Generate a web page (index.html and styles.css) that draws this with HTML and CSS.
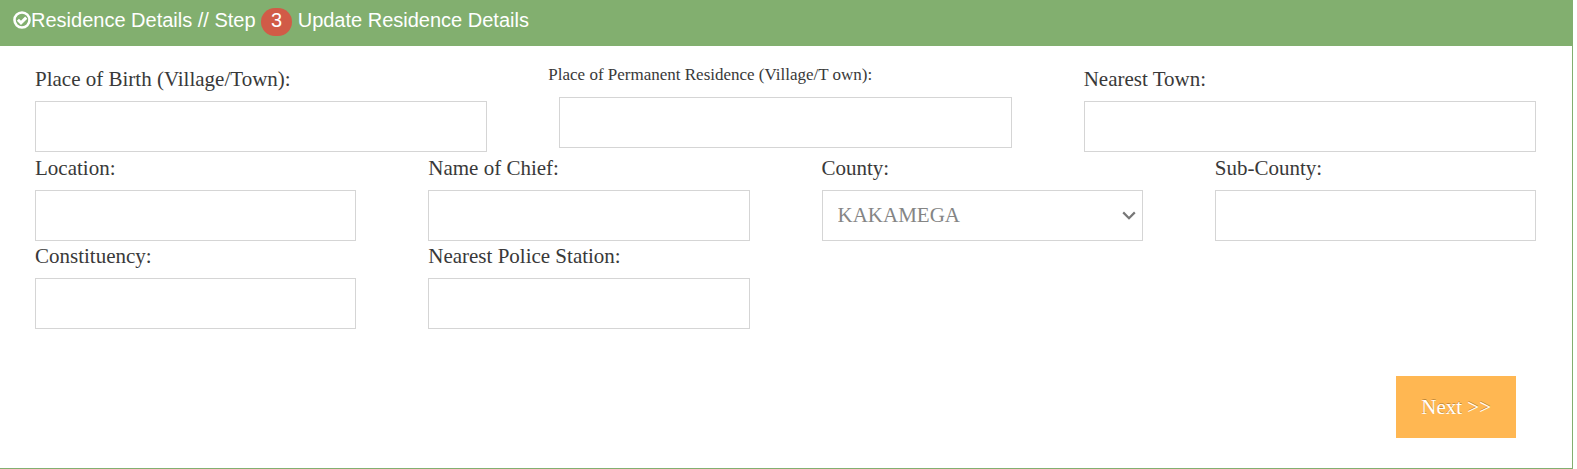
FILE: index.html
```
<!DOCTYPE html>
<html lang="en">
<head>
  <meta charset="UTF-8" />
  <meta name="viewport" content="width=device-width, initial-scale=1.0"/>
  <title>Residence Details</title>
  <link rel="stylesheet" href="styles.css">
</head>
<body>
  <form class="widget-box" action="#" method="post">
    <!-- Header -->
    <div class="widget-title">
      <h4><svg class="icon-check" viewBox="0 0 18 18" aria-hidden="true">
        <circle cx="9" cy="9" r="7.5" fill="none" stroke="#fff" stroke-width="2.6"/>
        <path d="M4.9 8.7l3.1 3.1 5.2-5.2" fill="none" stroke="#fff" stroke-width="3"/>
      </svg>Residence Details // Step <span class="badge">3</span> Update Residence Details</h4>
    </div>

    <div class="widget-body">
      <div class="row row-3">
        <div class="field">
          <label for="birth-place">Place of Birth (Village/Town):</label>
          <input type="text" id="birth-place" name="birth_place">
        </div>
        <div class="field field-small">
          <label for="permanent-residence">Place of Permanent Residence (Village/T own):</label>
          <input type="text" id="permanent-residence" name="permanent_residence">
        </div>
        <div class="field">
          <label for="nearest-town">Nearest Town:</label>
          <input type="text" id="nearest-town" name="nearest_town">
        </div>
      </div>

      <div class="row row-4">
        <div class="field">
          <label for="location">Location:</label>
          <input type="text" id="location" name="location">
        </div>
        <div class="field">
          <label for="chief">Name of Chief:</label>
          <input type="text" id="chief" name="chief">
        </div>
        <div class="field">
          <label for="county">County:</label>
          <select id="county" name="county">
            <option>KAKAMEGA</option>
          </select>
        </div>
        <div class="field">
          <label for="sub-county">Sub-County:</label>
          <input type="text" id="sub-county" name="sub_county">
        </div>
        <div class="field">
          <label for="constituency">Constituency:</label>
          <input type="text" id="constituency" name="constituency">
        </div>
        <div class="field">
          <label for="police-station">Nearest Police Station:</label>
          <input type="text" id="police-station" name="police_station">
        </div>
      </div>

      <div class="actions">
        <button type="submit" class="btn-next">Next &gt;&gt;</button>
      </div>
    </div>
  </form>
</body>
</html>
```

FILE: styles.css
```
* {
  box-sizing: border-box;
}

body {
  margin: 0;
  background-color: #fff;
  color: #393939;
  font-family: "Liberation Serif", "Times New Roman", serif;
  font-size: 21px;
}

.widget-box {
  margin-right: 4px;
  border-right: 1px solid #82af6f;
  border-bottom: 1px solid #82af6f;
}

.widget-title {
  padding: 8px 13px 10px;
  background-color: #82af6f;
  color: #fff;
}

.widget-title h4 {
  margin: 0;
  font-family: "Liberation Sans", Arial, sans-serif;
  font-size: 20px;
  font-weight: normal;
  line-height: 24px;
}

.icon-check {
  width: 18px;
  height: 18px;
  vertical-align: -2px;
}

.badge {
  display: inline-block;
  width: 31px;
  height: 28px;
  border-radius: 14px;
  background-color: #d15b47;
  text-align: center;
}

.widget-body {
  padding: 18px 36px 30px 35px;
}

.row {
  display: grid;
  column-gap: 72px;
  margin-bottom: 1px;
}

.row-3 {
  grid-template-columns: repeat(3, 1fr);
}

.row-4 {
  grid-template-columns: repeat(4, 1fr);
}

.field label {
  display: block;
  height: 37px;
  line-height: 30px;
}

/* smaller caption, hangs out to the left of its input */
.field-small label {
  height: 33px;
  margin-left: -11px;
  font-size: 17px;
  line-height: 22px;
}

.field input,
.field select {
  display: block;
  width: 100%;
  height: 51px;
  padding: 0 15px;
  border: 1px solid #d5d5d5;
  border-radius: 0;
  background-color: #fff;
  color: #858585;
  font-family: inherit;
  font-size: 21px;
}

.field select {
  padding-bottom: 2px;
  appearance: none;
  background-image: url("data:image/svg+xml,%3Csvg xmlns='http://www.w3.org/2000/svg' width='14' height='9' viewBox='0 0 14 9'%3E%3Cpath d='M1.2 1.4L7 7.2l5.800-5.800' fill='none' stroke='%23777' stroke-width='2.2'/%3E%3C/svg%3E");
  background-repeat: no-repeat;
  background-position: right 6px center;
}

.field input:focus,
.field select:focus {
  border-color: #f59942;
  outline: none;
}

.actions {
  display: flex;
  justify-content: flex-end;
  padding: 46px 20px 0 0;
}

.btn-next {
  height: 62px;
  padding: 0 25px;
  border: none;
  background-color: #ffb752;
  color: #fff;
  font-family: inherit;
  font-size: 21px;
  text-shadow: 0 -1px 0 rgba(0, 0, 0, 0.25);
  cursor: pointer;
}
```
